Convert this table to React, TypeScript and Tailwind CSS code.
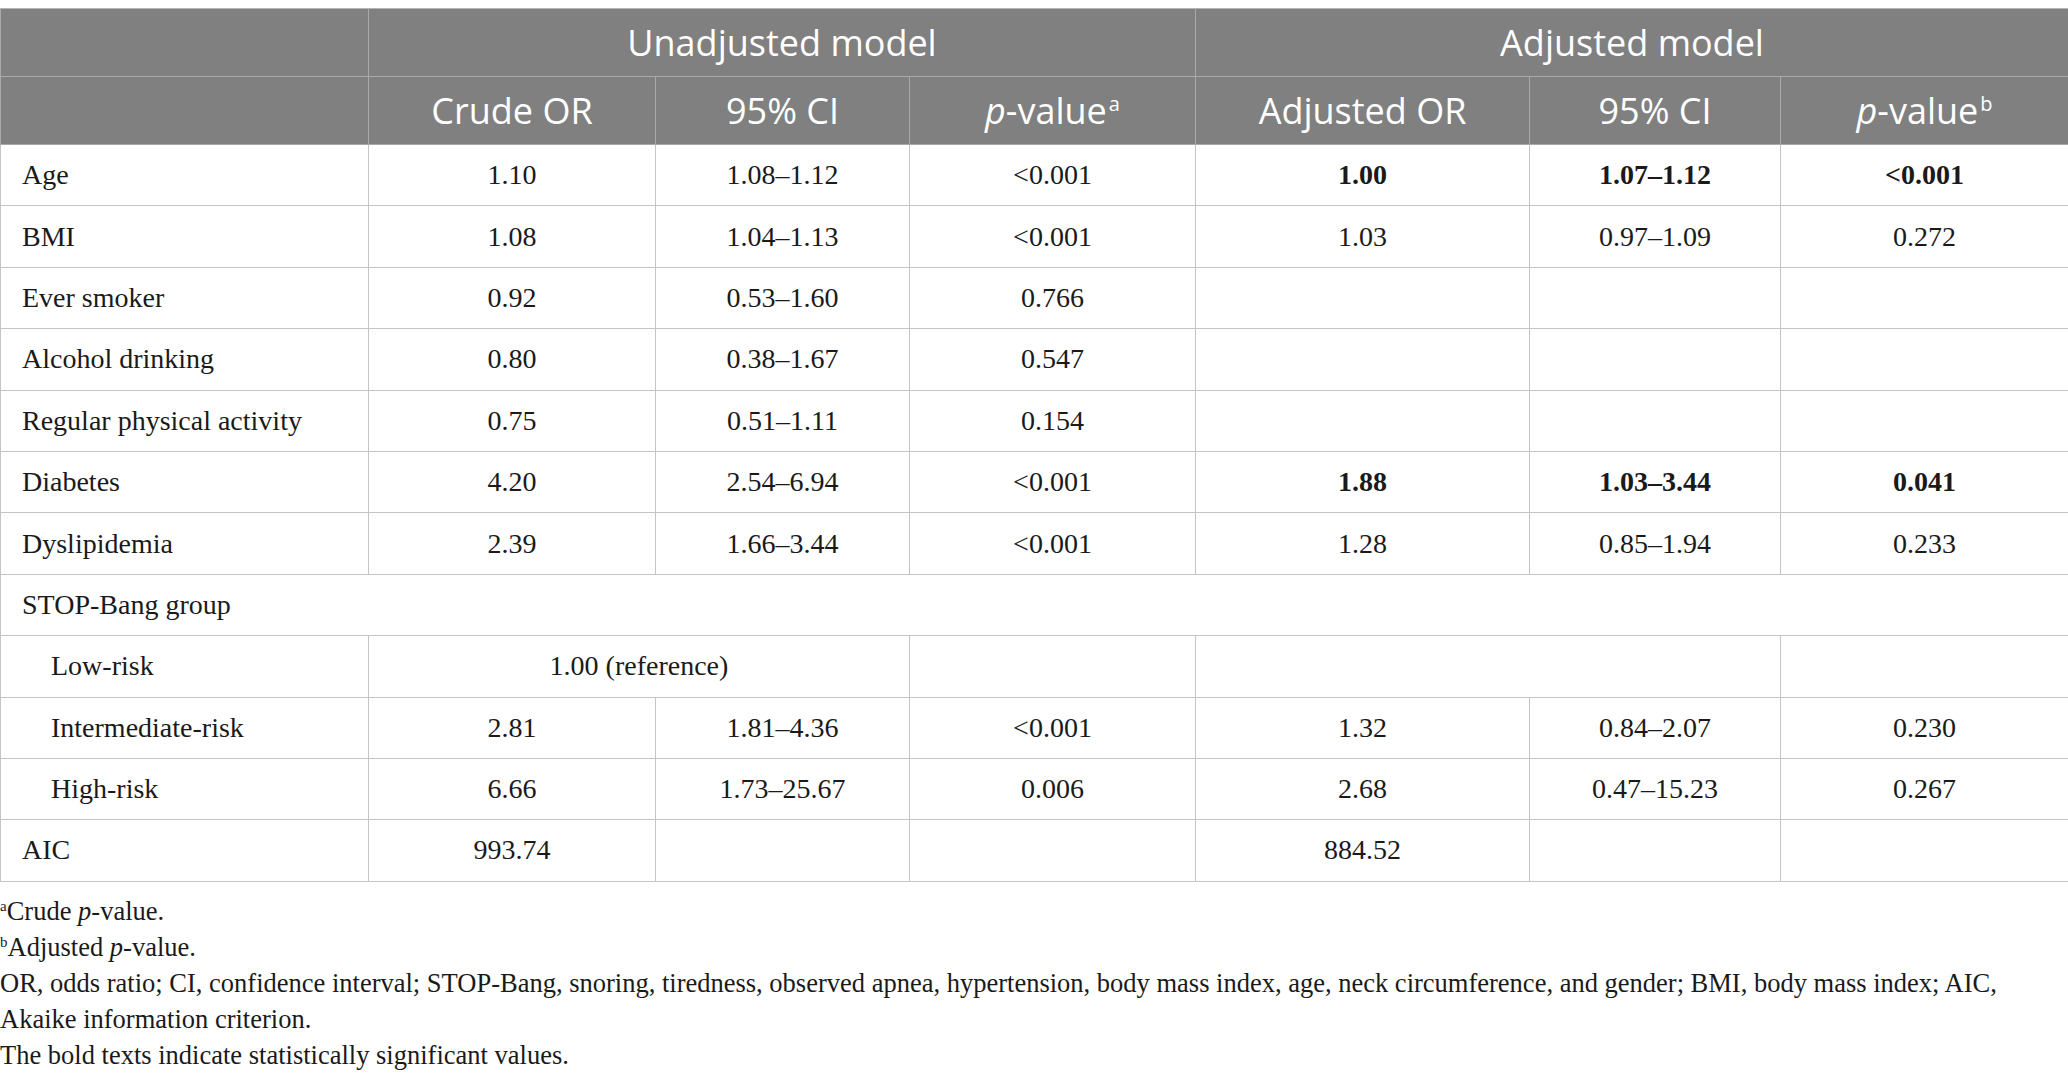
import React from "react";

type Cell = { t?: React.ReactNode; span?: number; b?: boolean };
type Row = { label: string; indent?: boolean; full?: boolean; cells?: Cell[] };

const rows: Row[] = [
  { label: "Age", cells: [{ t: "1.10" }, { t: "1.08–1.12" }, { t: "<0.001" }, { t: "1.00", b: true }, { t: "1.07–1.12", b: true }, { t: "<0.001", b: true }] },
  { label: "BMI", cells: [{ t: "1.08" }, { t: "1.04–1.13" }, { t: "<0.001" }, { t: "1.03" }, { t: "0.97–1.09" }, { t: "0.272" }] },
  { label: "Ever smoker", cells: [{ t: "0.92" }, { t: "0.53–1.60" }, { t: "0.766" }, {}, {}, {}] },
  { label: "Alcohol drinking", cells: [{ t: "0.80" }, { t: "0.38–1.67" }, { t: "0.547" }, {}, {}, {}] },
  { label: "Regular physical activity", cells: [{ t: "0.75" }, { t: "0.51–1.11" }, { t: "0.154" }, {}, {}, {}] },
  { label: "Diabetes", cells: [{ t: "4.20" }, { t: "2.54–6.94" }, { t: "<0.001" }, { t: "1.88", b: true }, { t: "1.03–3.44", b: true }, { t: "0.041", b: true }] },
  { label: "Dyslipidemia", cells: [{ t: "2.39" }, { t: "1.66–3.44" }, { t: "<0.001" }, { t: "1.28" }, { t: "0.85–1.94" }, { t: "0.233" }] },
  { label: "STOP-Bang group", full: true },
  { label: "Low-risk", indent: true, cells: [{ t: "1.00 (reference)", span: 2 }, {}, { span: 2 }, {}] },
  { label: "Intermediate-risk", indent: true, cells: [{ t: "2.81" }, { t: "1.81–4.36" }, { t: "<0.001" }, { t: "1.32" }, { t: "0.84–2.07" }, { t: "0.230" }] },
  { label: "High-risk", indent: true, cells: [{ t: "6.66" }, { t: "1.73–25.67" }, { t: "0.006" }, { t: "2.68" }, { t: "0.47–15.23" }, { t: "0.267" }] },
  { label: "AIC", cells: [{ t: "993.74" }, {}, {}, { t: "884.52" }, {}, {}] },
];

export default function App() {
  return (
    <div className="w-[2068px] bg-white pt-[8px]">
      <table className="w-[2068px] table-fixed border-collapse">
        <colgroup>
          <col className="w-[368px]" />
          <col className="w-[287px]" />
          <col className="w-[254px]" />
          <col className="w-[286px]" />
          <col className="w-[334px]" />
          <col className="w-[251px]" />
          <col className="w-[288px]" />
        </colgroup>
        <thead className="bg-[#808080] text-white font-['Open_Sans','Noto_Sans',sans-serif] text-[36px]">
          <tr className="h-[68px]">
            <th className="border border-[#a9a9a9] border-t-[#b5b5b5] font-normal"></th>
            <th colSpan={3} className="border border-[#a9a9a9] border-t-[#b5b5b5] font-normal">
              Unadjusted model
            </th>
            <th colSpan={3} className="border border-[#a9a9a9] border-t-[#b5b5b5] font-normal">
              Adjusted model
            </th>
          </tr>
          <tr className="h-[68px]">
            <th className="border border-[#a9a9a9] font-normal"></th>
            <th className="border border-[#a9a9a9] font-normal">Crude OR</th>
            <th className="border border-[#a9a9a9] font-normal">95% CI</th>
            <th className="border border-[#a9a9a9] font-normal">
              <i>p</i>-value<sup className="text-[20px] relative -top-[13px] ml-[2px]">a</sup>
            </th>
            <th className="border border-[#a9a9a9] font-normal">Adjusted OR</th>
            <th className="border border-[#a9a9a9] font-normal">95% CI</th>
            <th className="border border-[#a9a9a9] font-normal">
              <i>p</i>-value<sup className="text-[20px] relative -top-[13px] ml-[2px]">b</sup>
            </th>
          </tr>
        </thead>
        <tbody className="font-['Liberation_Serif','Times_New_Roman',serif] text-[28px] text-[#1a1a1a]">
          {rows.map((r, i) => (
            <tr key={i} className="h-[61.4px]">
              {r.full ? (
                <td colSpan={7} className="border border-[#c4c4c4] text-left pl-[21px]">
                  {r.label}
                </td>
              ) : (
                <>
                  <td className={"border border-[#c4c4c4] text-left " + (r.indent ? "pl-[50px]" : "pl-[21px]")}>
                    {r.label}
                  </td>
                  {r.cells!.map((c, j) => (
                    <td
                      key={j}
                      colSpan={c.span ?? 1}
                      className={"border border-[#c4c4c4] text-center " + (c.b ? "font-bold" : "")}
                    >
                      {c.t ?? ""}
                    </td>
                  ))}
                </>
              )}
            </tr>
          ))}
        </tbody>
      </table>
      <div className="mt-[11px] font-['Liberation_Serif','Times_New_Roman',serif] text-[26.5px] leading-[36px] text-[#1a1a1a]">
        <p>
          <sup className="text-[15px] relative -top-[9px]">a</sup>Crude <i>p</i>-value.
        </p>
        <p>
          <sup className="text-[15px] relative -top-[9px]">b</sup>Adjusted <i>p</i>-value.
        </p>
        <p>
          OR, odds ratio; CI, confidence interval; STOP-Bang, snoring, tiredness, observed apnea, hypertension, body mass
          index, age, neck circumference, and gender; BMI, body mass index; AIC, Akaike information criterion.
        </p>
        <p>The bold texts indicate statistically significant values.</p>
      </div>
    </div>
  );
}
